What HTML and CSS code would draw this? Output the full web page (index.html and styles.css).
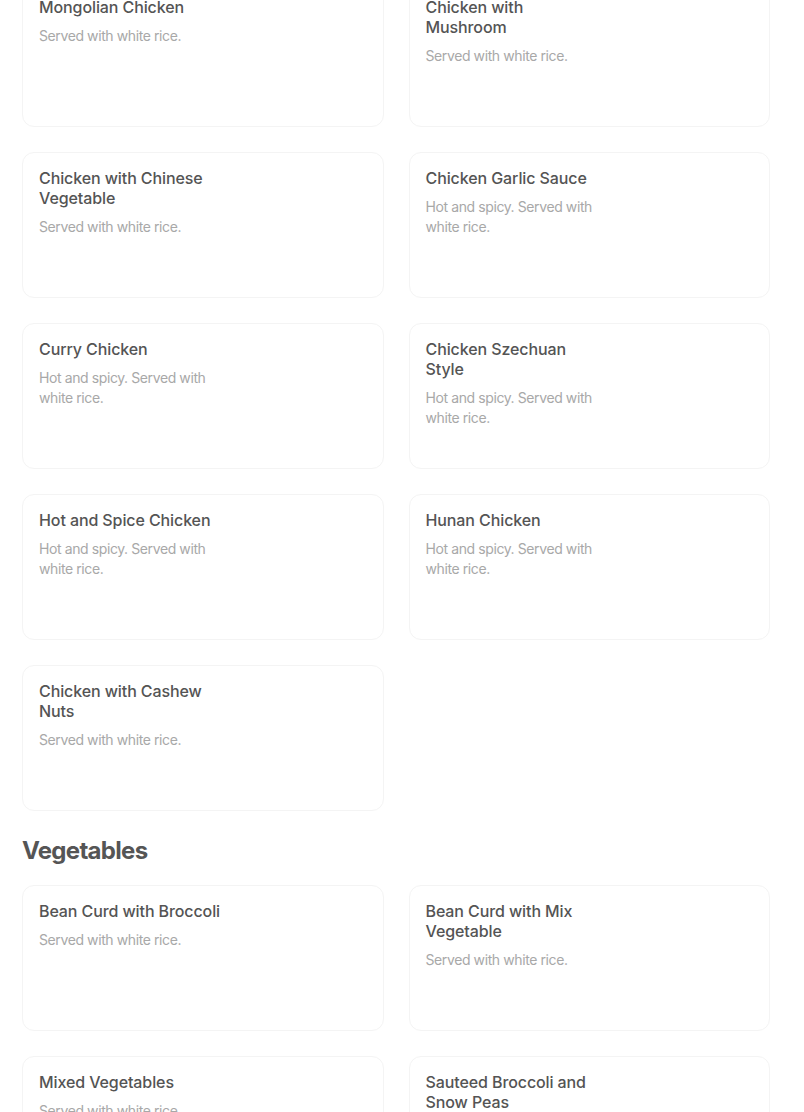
FILE: index.html
```html
<!DOCTYPE html>
<html>
<head>
<meta charset="utf-8">
<link rel="stylesheet" href="styles.css">
</head>
<body>
<main class="menu">
  <section class="section section-first">
    <div class="grid">
      <div class="card"><div class="info"><h3 class="title">Mongolian Chicken</h3><p class="desc">Served with white rice.</p></div></div>
      <div class="card"><div class="info"><h3 class="title">Chicken with Mushroom</h3><p class="desc">Served with white rice.</p></div></div>
      <div class="card"><div class="info"><h3 class="title">Chicken with Chinese Vegetable</h3><p class="desc">Served with white rice.</p></div></div>
      <div class="card"><div class="info"><h3 class="title">Chicken Garlic Sauce</h3><p class="desc">Hot and spicy. Served with white rice.</p></div></div>
      <div class="card"><div class="info"><h3 class="title">Curry Chicken</h3><p class="desc">Hot and spicy. Served with white rice.</p></div></div>
      <div class="card"><div class="info"><h3 class="title">Chicken Szechuan Style</h3><p class="desc">Hot and spicy. Served with white rice.</p></div></div>
      <div class="card"><div class="info"><h3 class="title">Hot and Spice Chicken</h3><p class="desc">Hot and spicy. Served with white rice.</p></div></div>
      <div class="card"><div class="info"><h3 class="title">Hunan Chicken</h3><p class="desc">Hot and spicy. Served with white rice.</p></div></div>
      <div class="card"><div class="info"><h3 class="title">Chicken with Cashew Nuts</h3><p class="desc">Served with white rice.</p></div></div>
    </div>
  </section>
  <section class="section">
    <h2 class="heading">Vegetables</h2>
    <div class="grid">
      <div class="card"><div class="info"><h3 class="title title-nowrap">Bean Curd with Broccoli</h3><p class="desc">Served with white rice.</p></div></div>
      <div class="card"><div class="info"><h3 class="title">Bean Curd with Mix Vegetable</h3><p class="desc">Served with white rice.</p></div></div>
      <div class="card"><div class="info"><h3 class="title">Mixed Vegetables</h3><p class="desc">Served with white rice.</p></div></div>
      <div class="card"><div class="info"><h3 class="title">Sauteed Broccoli and Snow Peas</h3><p class="desc">Served with white rice.</p></div></div>
    </div>
  </section>
</main>
</body>
</html>
```
FILE: styles.css
```css
* { box-sizing: border-box; }
html, body { margin: 0; padding: 0; background: #ffffff; }
body {
  font-family: Inter, "Liberation Sans", sans-serif;
  overflow: hidden;
}
.menu {
  padding: 0 34px 0 22px;
  margin-top: -19px;
}
.heading {
  margin: 24px 0 18px;
  font-size: 24px;
  line-height: 32px;
  font-weight: 700;
  color: #555555;
  letter-spacing: -0.7px;
}
.grid {
  display: grid;
  grid-template-columns: 1fr 1fr;
  column-gap: 25px;
  row-gap: 25px;
}
.card {
  height: 146px;
  border: 1px solid #f4f4f4;
  border-radius: 12px;
  padding: 15px 16px;
  background: #fff;
}
.info { width: 182px; }
.title {
  margin: 0;
  font-size: 16px;
  line-height: 20px;
  font-weight: 500;
  color: #545454;
  letter-spacing: -0.1px;
}
.title-nowrap { white-space: nowrap; }
.desc {
  margin: 9px 0 0;
  font-size: 14px;
  line-height: 20px;
  font-weight: 400;
  color: #a8a8a8;
  letter-spacing: -0.4px;
}
```
